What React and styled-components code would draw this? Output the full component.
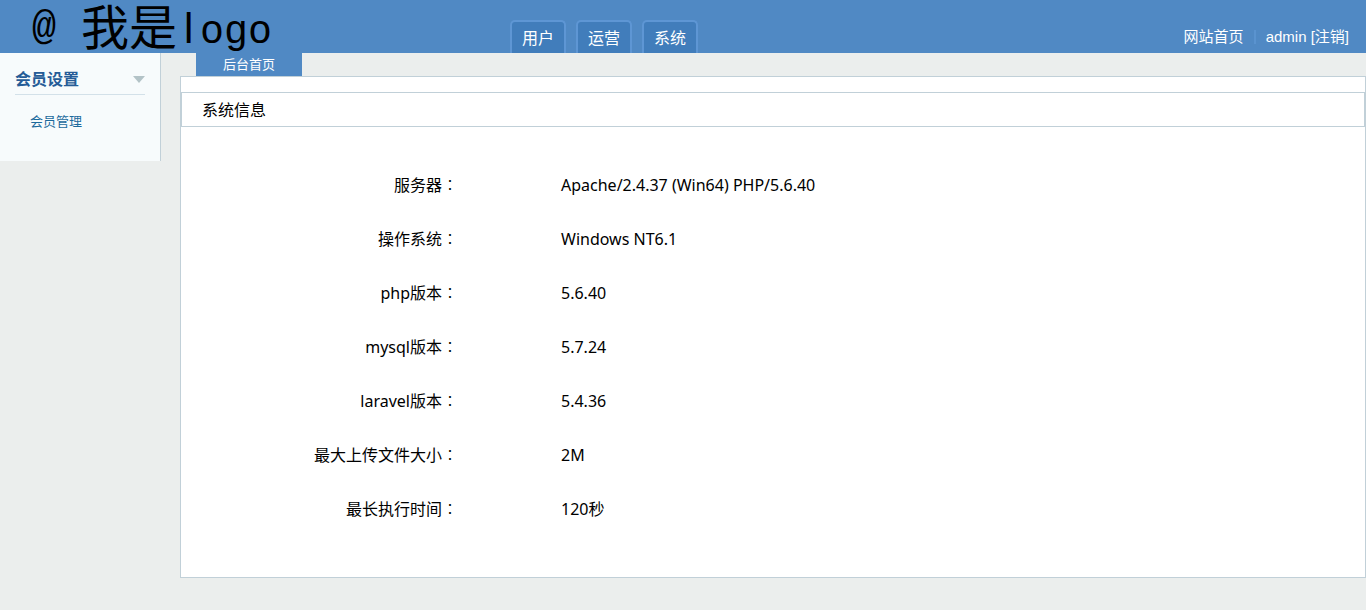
import React from "react";
import styled, { createGlobalStyle } from "styled-components";

const sans = '"Noto Sans", "Noto Sans CJK SC", sans-serif';
const ui = '"Liberation Sans", "Noto Sans CJK SC", sans-serif';

const GlobalStyle = createGlobalStyle`
  *, *::before, *::after { box-sizing: border-box; }
  body {
    margin: 0;
    background: #ebeeed;
    color: #000;
    font: 16px/24px ${sans};
  }
  a { text-decoration: none; }
`;

const Header = styled.header`
  display: flex;
  align-items: flex-end;
  height: 53px;
  background: #5089c4;
  font-family: ${ui};
`;

const LogoLink = styled.a`
  flex: none;
  width: 510px;
  height: 53px;
`;

const LogoArt = styled.svg`
  display: block;
  overflow: visible;
  fill: #000;
`;

const MainNav = styled.nav`
  display: flex;
  gap: 10px;
  flex: 1;
`;

const NavTab = styled.a`
  padding: 4px 10px 1px;
  border: 2px solid #5e96d4;
  border-bottom: 0;
  border-radius: 5px 5px 0 0;
  background: #417dbb;
  color: #fff;
  line-height: 26px;
`;

const UserLinks = styled.div`
  display: flex;
  align-items: center;
  padding: 0 17px 4px 0;
  color: #fff;
  font-size: 15px;
`;

const UserLink = styled.a`
  color: #fff;
`;

const Divider = styled.span`
  width: 2px;
  height: 14px;
  margin: 0 10px;
  background: #5a93cf;
`;

const Body = styled.div`
  display: flex;
  align-items: flex-start;
  gap: 19px;
`;

const Sidebar = styled.aside`
  flex: none;
  width: 161px;
  padding: 11px 15px 28px;
  border-right: 1px solid #c1d0d8;
  background: #f7fbfc;
`;

const GroupToggle = styled.button`
  display: flex;
  align-items: center;
  justify-content: space-between;
  width: 100%;
  height: 31px;
  padding: 1px 0 0;
  border: 0;
  border-bottom: 1px solid #d3e1e9;
  background: none;
  color: #255c97;
  font: bold 16px/30px ${ui};
  cursor: pointer;
`;

const Caret = styled.span`
  border: 6px solid transparent;
  border-top: 7px solid #b3c3c7;
  border-bottom: 0;
`;

const GroupList = styled.ul`
  margin: 0;
  padding: 14px 0 0 15px;
  list-style: none;
`;

const GroupLink = styled.a`
  display: block;
  color: #1b6a9c;
  font-size: 13px;
`;

const Main = styled.main`
  flex: 1;
  min-width: 0;
`;

const PageTab = styled.a`
  display: block;
  width: 106px;
  margin-left: 16px;
  background: #5089c4;
  color: #fff;
  font-size: 13px;
  line-height: 23px;
  text-align: center;
`;

const Panel = styled.section`
  padding: 15px 0 41px;
  border: 1px solid #c1d0d8;
  background: #fff;
`;

const PanelTitle = styled.h1`
  margin: 0 0 31px;
  padding: 1px 20px 0;
  border: 1px solid #c1d0d8;
  font-size: 16px;
  font-weight: normal;
  line-height: 32px;
`;

const InfoTable = styled.table`
  width: 100%;
  border-collapse: collapse;
  table-layout: fixed;
`;

const Label = styled.th`
  width: 25%;
  height: 54px;
  padding: 0 19px 0 0;
  font-weight: normal;
  text-align: right;
`;

const Colon = styled.span`
  font-family: "Noto Sans CJK TC", sans-serif;
  font-weight: 300;
  line-height: 16px;
`;

const Value = styled.td`
  padding: 0 0 0 84px;
`;

const tabs = ["用户", "运营", "系统"];

const info = [
  ["服务器", "Apache/2.4.37 (Win64) PHP/5.6.40"],
  ["操作系统", "Windows NT6.1"],
  ["php版本", "5.6.40"],
  ["mysql版本", "5.7.24"],
  ["laravel版本", "5.4.36"],
  ["最大上传文件大小", "2M"],
  ["最长执行时间", "120秒"],
];

function Logo() {
  return (
    <LogoArt width="290" height="53" role="img" aria-label="@ 我是logo">
      <text x="32" y="39" fontFamily="Liberation Mono, monospace" fontSize="40">@</text>
      <text x="81" y="45" fontFamily="Noto Sans CJK SC, sans-serif" fontSize="48">我是</text>
      <text x="184" y="43" fontFamily="Liberation Sans, sans-serif" fontSize="42">l</text>
      <text x="200" y="43" fontFamily="Liberation Mono, monospace" fontSize="40">ogo</text>
    </LogoArt>
  );
}

export default function App() {
  return (
    <>
      <GlobalStyle />
      <Header>
        <LogoLink href="#">
          <Logo />
        </LogoLink>
        <MainNav>
          {tabs.map((tab) => (
            <NavTab key={tab} href="#">{tab}</NavTab>
          ))}
        </MainNav>
        <UserLinks>
          <UserLink href="#">网站首页</UserLink>
          <Divider />
          <span>
            admin <UserLink href="#">[注销]</UserLink>
          </span>
        </UserLinks>
      </Header>
      <Body>
        <Sidebar>
          <GroupToggle type="button" aria-expanded="true">
            会员设置
            <Caret />
          </GroupToggle>
          <GroupList>
            <li>
              <GroupLink href="#">会员管理</GroupLink>
            </li>
          </GroupList>
        </Sidebar>
        <Main>
          <PageTab href="#">后台首页</PageTab>
          <Panel>
            <PanelTitle>系统信息</PanelTitle>
            <InfoTable>
              <tbody>
                {info.map(([label, value]) => (
                  <tr key={label}>
                    <Label scope="row">
                      {label}
                      <Colon>：</Colon>
                    </Label>
                    <Value>{value}</Value>
                  </tr>
                ))}
              </tbody>
            </InfoTable>
          </Panel>
        </Main>
      </Body>
    </>
  );
}
